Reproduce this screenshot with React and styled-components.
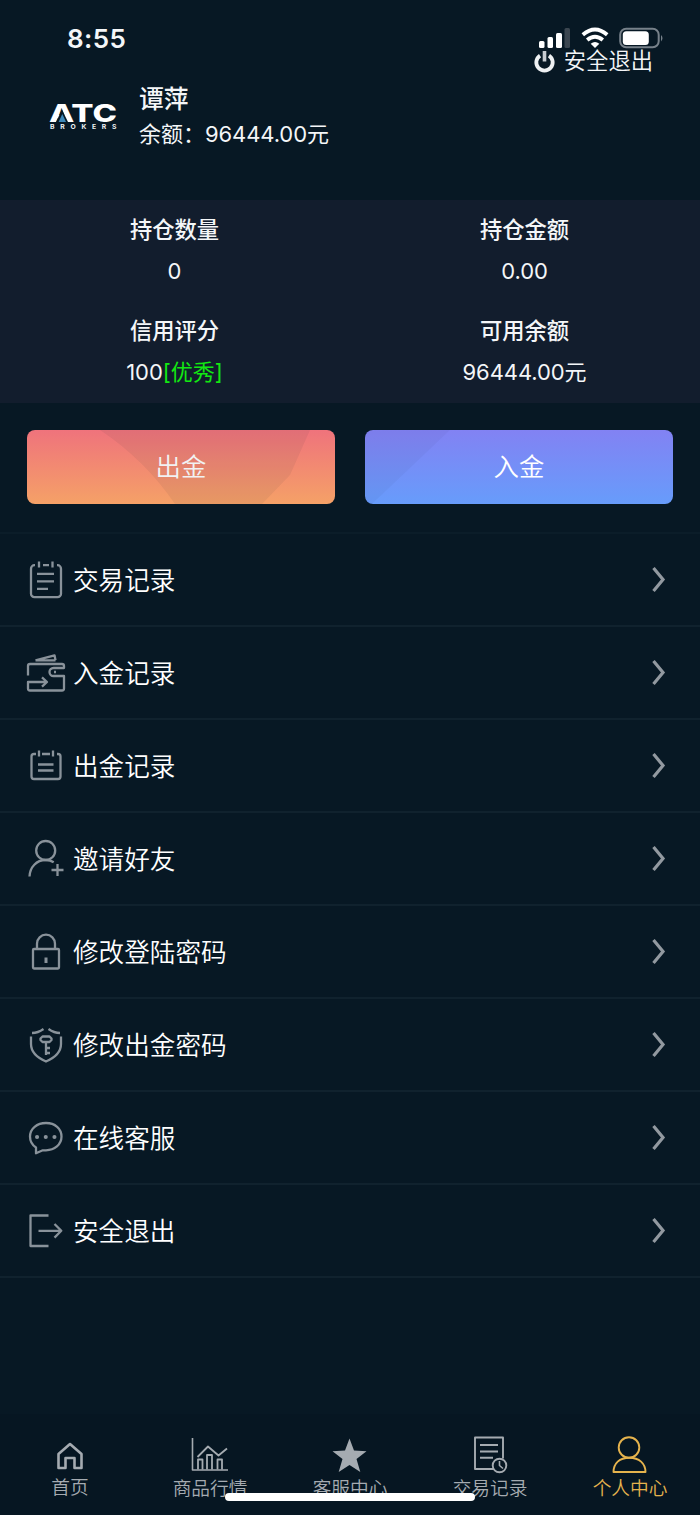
import React from "react";
import styled, { createGlobalStyle } from "styled-components";

const Global = createGlobalStyle`
  * { box-sizing: border-box; }
  body { margin: 0; background: #071824; }
  svg { display: block; overflow: visible; flex: none; }
`;

const Page = styled.div`
  position: relative;
  width: 700px;
  height: 1515px;
  overflow: hidden;
  display: flex;
  flex-direction: column;
  background: #071824;
  color: #f4f6f8;
  font-family: Inter, "Noto Sans CJK SC", sans-serif;
  font-size: 22.3px;
`;

const Watermark = styled.svg`
  position: absolute;
  left: 0;
  top: 0;
  pointer-events: none;
`;

const StatusBar = styled.div`
  height: 50px;
  padding: 24px 37px 0 67px;
  display: flex;
  justify-content: space-between;
  align-items: flex-start;
`;

const Clock = styled.div`
  font-size: 26px;
  line-height: 30px;
  font-weight: 600;
  letter-spacing: 0.4px;
`;

const Header = styled.header`
  height: 150px;
  padding: 0 47px 0 50px;
  display: flex;
  align-items: flex-start;
`;

const LogoBox = styled.div`
  width: 89px;
  padding-top: 53px;
`;

const Account = styled.div`
  flex: 1;
  padding-top: 32px;
`;

const UserName = styled.div`
  font-size: 24.8px;
  line-height: 34px;
  font-weight: 500;
`;

const Balance = styled.div`
  margin-top: 2px;
  line-height: 32px;
  font-size: 22px;
  white-space: nowrap;
`;

const Amount = styled.span`
  letter-spacing: -0.1px;
`;

const Logout = styled.div`
  display: flex;
  gap: 9px;
  align-items: center;
  font-size: 22.3px;
  font-weight: 350;
  line-height: 25px;
  white-space: nowrap;
`;

const LogoutLabel = styled.span`
  margin-top: -2px;
`;

const Stats = styled.section`
  height: 203px;
  padding-top: 11px;
  display: grid;
  grid-template-columns: 349px 351px;
  grid-auto-rows: 101px;
  background: #121d2d;
  text-align: center;
`;

const StatTitle = styled.div`
  height: 36px;
  line-height: 37px;
  font-weight: 500;
`;

const StatValue = styled.div`
  margin-top: 6px;
  height: 36px;
  line-height: 36px;
  font-size: 22px;
`;

const Good = styled.span`
  color: #12e812;
`;

const Actions = styled.div`
  display: grid;
  grid-template-columns: 308px 308px;
  gap: 30px;
  padding: 27px 27px 28px;
`;

const ActionButton = styled.button`
  height: 74px;
  padding: 0 0 4px;
  border: 0;
  border-radius: 8px;
  color: #fff;
  font: inherit;
  font-size: 25.4px;
  font-weight: 350;
  background: linear-gradient(${(p) => p.$from}, ${(p) => p.$to});
`;

const Menu = styled.nav`
  flex: 1;
  border-top: 2px solid #0b1d29;
`;

const Row = styled.div`
  height: 93px;
  padding: 0 34px 0 26px;
  display: flex;
  align-items: center;
  border-bottom: 2px solid #10222e;
  font-size: 25.6px;
  color: #fff;
`;

const RowLabel = styled.span`
  flex: 1;
  margin-left: 7px;
  padding-top: 2px;
  font-weight: 350;
  line-height: 38px;
`;

const TabBar = styled.footer`
  height: 101px;
  display: grid;
  grid-template-columns: repeat(5, 140px);
  background: #061622;
`;

const Tab = styled.div`
  display: flex;
  flex-direction: column;
  align-items: center;
  padding-top: ${(p) => (p.$home ? 20 : 21)}px;
  color: ${(p) => (p.$active ? "#e5b34d" : "#a5abb1")};
  font-size: 18.7px;
  font-weight: 350;
  line-height: 26px;
`;

const TabIcon = styled.div`
  height: 41px;
`;

const HomeIndicator = styled.div`
  position: absolute;
  left: 225px;
  top: 1493px;
  width: 250px;
  height: 8px;
  border-radius: 4px;
  background: #fff;
`;

const StatusIcons = () => (
  <svg width="124" height="24" viewBox="539 24 124 24" fill="#fff">
    <rect x="539" y="41" width="5.5" height="7" rx="1.5" />
    <rect x="547.5" y="37" width="5.5" height="11" rx="1.5" />
    <rect x="556" y="33" width="6" height="15" rx="1.5" />
    <rect x="564.5" y="28" width="5.5" height="20" rx="1.5" fill="#3b4650" />
    <path d="M595 48l-4.3-4.3q4.3-3.6 8.6 0z" />
    <path d="M582.8 34.7Q595 24.2 607.2 34.7M587.2 40Q595 33.5 602.8 40" fill="none" stroke="#fff" strokeWidth="3.8" />
    <rect x="620.2" y="28.7" width="38.5" height="18.6" rx="6" fill="none" stroke="#77818a" strokeWidth="2" />
    <rect x="622.8" y="31.2" width="26" height="13.8" rx="3.5" />
    <path d="M661 35q3 3.2 0 6.5z" fill="#77818a" />
  </svg>
);

const PowerIcon = () => (
  <svg width="21" height="22" viewBox="0 0 21 22" fill="none" stroke="#eef1f3">
    <path d="M6 4.6a8.2 8.2 0 1 0 9 0" strokeWidth="3.8" />
    <path d="M10.5 0v10.5" strokeWidth="3.6" stroke="#c7ccd1" />
  </svg>
);

const Logo = () => (
  <svg width="68" height="28" viewBox="0 0 68 28">
    <text x="-1" y="19" fill="#fff" fontFamily="Inter, sans-serif" fontWeight="800" fontSize="24.5" textLength="68" lengthAdjust="spacingAndGlyphs">ATC</text>
    <path d="M12 6.5L5.8 19.5h12.4z" fill="#071824" />
    <path d="M12.3 11L8.6 19h7.4z" fill="#3d88b8" />
    <text x="0" y="26" fill="#eef2f5" fontFamily="Inter, sans-serif" fontWeight="700" fontSize="6.8" textLength="66.5">BROKERS</text>
  </svg>
);

const menuPaths = {
  notes: (
    <>
      <path d="M9 5.2H8.5A3.5 3.5 0 0 0 5 8.7v25a3.5 3.5 0 0 0 3.5 3.5h23a3.5 3.5 0 0 0 3.5-3.5v-25a3.5 3.5 0 0 0-3.5-3.5H31M17 5.200h6" />
      <path d="M13 1.500v6M26.500 1.500v6M11 13.800h17M11 21.400h17M11 28.800h11" />
    </>
  ),
  wallet: (
    <>
      <path d="M9.5 7.300l19-5 1 5M9.500 7.300h20" />
      <path d="M2 22.500V13a2 2 0 0 1 2-2h32a2 2 0 0 1 2 2v2H27.500a3.600 3.600 0 0 0 0 8H38v12.500a2 2 0 0 1-2 2H4a2 2 0 0 1-2-2V29h18M16 24.300l5 4.700-5 4.700M28 19h2" />
    </>
  ),
  calendar: (
    <>
      <path d="M10 8H8a2.500 2.500 0 0 0-2.500 2.500v20A2.500 2.500 0 0 0 8 33h24a2.500 2.500 0 0 0 2.500-2.500v-20A2.500 2.500 0 0 0 32 8h-1M16 8h8" />
      <path d="M13 4.500v6M27 4.500v6M12 18.500h15.500M12 24.500h15.500" />
    </>
  ),
  invite: (
    <>
      <circle cx="19.7" cy="11.5" r="9.5" />
      <path d="M3.500 37.500c.4-9.500 7-16.500 16.200-16.500 3 0 5.500.7 8 2.300M31.500 25v12M25.500 31h12" />
    </>
  ),
  lock: (
    <>
      <rect x="7" y="17" width="26" height="19.5" rx="1" />
      <path d="M11 17v-5.300a9 9 0 0 1 18 0V17" />
      <path d="M20 25.500V31" strokeWidth="3" />
    </>
  ),
  shield: (
    <>
      <path d="M17.500 4Q12 8 6 8M22.500 4Q28 8 34 8M5 11.500v7.500q0 11 15 17.500 15-6.500 15-17.500v-7.500" />
      <path d="M16.500 11.500h7l2 2v1.500l-2 2h-7l-2-2v-1.500zM20 17.500V30M20 23h4M20 28h4" />
    </>
  ),
  chat: (
    <>
      <path d="M10 29.500C5.700 26.800 4 23 4 18.600 4 10.500 11 5 20 5s15.500 5.500 15.500 13.600S28.500 32.300 20 32.300h-3.200L10 35.300z" />
      <path d="M11 19h.1M19.700 19h.1M28.400 19h.1" strokeWidth="4" strokeLinecap="round" />
    </>
  ),
  exit: <path d="M22.500 4.500H4.500V35h18M12.500 19.800h22.500M28.500 13l6.800 6.800-6.800 6.800" />,
};

const MenuIcon = ({ name }) => (
  <svg width="40" height="39" viewBox="0 0 40 39" fill="none" stroke="#89929a" strokeWidth="2.3" strokeLinejoin="round">
    {menuPaths[name]}
  </svg>
);

const Chevron = () => (
  <svg width="14" height="26" viewBox="0 0 14 26" fill="none" stroke="#9299a0" strokeWidth="3.2">
    <path d="M1.500 1L11 12.500 1.500 24" />
  </svg>
);

const tabPaths = {
  home: <path d="M8.500 20L20 10l11.500 10V34h-7V24h-9v10h-7z" strokeWidth="2.6" />,
  chart: (
    <>
      <path d="M2.500 3v32H38" strokeWidth="1.6" />
      <path d="M7.500 22L18 11.500l10.500 9L37 13.500M8 34.500v-10h4.500v10M17 34.500V20h5v14.500M27.500 34.500v-10H32v10" strokeWidth="1.8" />
    </>
  ),
  star: <path d="M19.500 3.500l4.500 12.100 12.500.6-10 7.900 3.800 13-10.800-7.200L8.700 37.100l3.800-13-10-7.900 12.500-.6z" fill="currentColor" stroke="none" />,
  history: (
    <>
      <path d="M24 34H5V2.500h28v21M10 10h18M10 16.500h18M10 22.800h13" strokeWidth="1.9" />
      <circle cx="29.5" cy="30.5" r="6.8" strokeWidth="1.9" />
      <path d="M29.500 26v4.500l3.500 3" strokeWidth="1.6" />
    </>
  ),
  user: (
    <>
      <circle cx="19" cy="12.5" r="10.3" strokeWidth="1.9" />
      <path d="M3.500 37c0-8.500 6-14.300 15.800-14.300S35.500 28.500 35.500 37z" strokeWidth="1.9" />
    </>
  ),
};

const stats = [
  ["持仓数量", "0"],
  ["持仓金额", "0.00"],
  ["信用评分", "100", "[优秀]"],
  ["可用余额", "96444.00元"],
];

const menu = [
  ["notes", "交易记录"],
  ["wallet", "入金记录"],
  ["calendar", "出金记录"],
  ["invite", "邀请好友"],
  ["lock", "修改登陆密码"],
  ["shield", "修改出金密码"],
  ["chat", "在线客服"],
  ["exit", "安全退出"],
];

const tabs = [
  ["home", "首页"],
  ["chart", "商品行情"],
  ["star", "客服中心"],
  ["history", "交易记录"],
  ["user", "个人中心"],
];

export default function App() {
  return (
    <Page>
      <Global />
      <StatusBar>
        <Clock>8:55</Clock>
        <StatusIcons />
      </StatusBar>
      <Header>
        <LogoBox><Logo /></LogoBox>
        <Account>
          <UserName>谭萍</UserName>
          <Balance>余额：<Amount>96444.00元</Amount></Balance>
        </Account>
        <Logout><PowerIcon /><LogoutLabel>安全退出</LogoutLabel></Logout>
      </Header>
      <Stats>
        {stats.map(([title, value, note]) => (
          <div key={title}>
            <StatTitle>{title}</StatTitle>
            <StatValue><Amount>{value}</Amount>{note && <Good>{note}</Good>}</StatValue>
          </div>
        ))}
      </Stats>
      <Actions>
        <ActionButton $from="#ef737c" $to="#f5a167">出金</ActionButton>
        <ActionButton $from="#8282f3" $to="#679cfb">入金</ActionButton>
      </Actions>
      <Menu>
        {menu.map(([icon, label]) => (
          <Row key={label}>
            <MenuIcon name={icon} />
            <RowLabel>{label}</RowLabel>
            <Chevron />
          </Row>
        ))}
      </Menu>
      <TabBar>
        {tabs.map(([icon, label]) => (
          <Tab key={label} $active={icon === "user"} $home={icon === "home"}>
            <TabIcon>
              <svg width="40" height="40" viewBox="0 0 40 40" fill="none" stroke="currentColor" strokeLinejoin="round">{tabPaths[icon]}</svg>
            </TabIcon>
            {label}
          </Tab>
        ))}
      </TabBar>
      <Watermark width="700" height="1515" viewBox="0 0 700 1515">
        <path d="M100 430H310L290 475 262 504H175Q145 460 100 430z" fill="#102030" opacity=".06" />
        <path d="M365 430H450L372 504H365z" fill="#102030" opacity=".04" />
      </Watermark>
      <HomeIndicator />
    </Page>
  );
}
